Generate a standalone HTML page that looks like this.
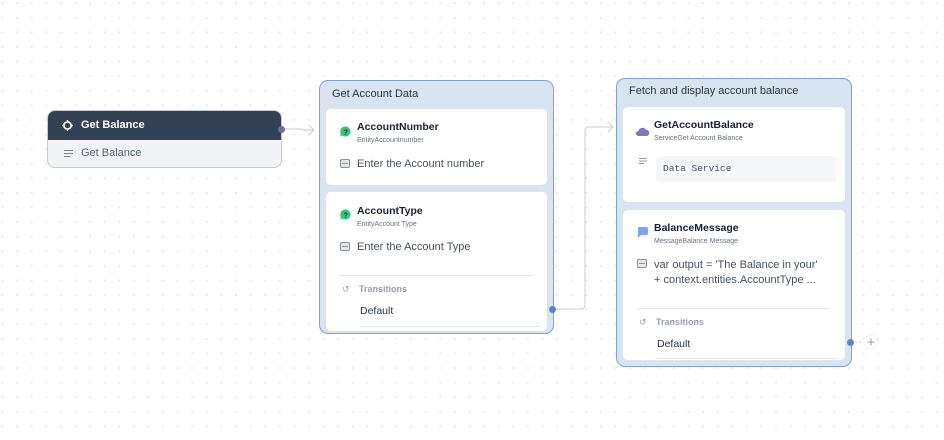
<!DOCTYPE html>
<html><head><style>
*{box-sizing:border-box;margin:0;padding:0}
body{width:944px;height:440px;overflow:hidden;background:#fff;font-family:"Liberation Sans",sans-serif;position:relative;
background-image:radial-gradient(circle,#e4e7ec 0.9px,transparent 1.2px);background-size:14.6px 14.6px;background-position:-4.8px -4.1px}
.abs{position:absolute}
.n1{left:47px;top:110px;width:235px;height:58px;border:1px solid #c3c8d2;border-radius:8px;overflow:hidden;background:#f1f3f7}
.n1 .h{height:29px;background:#334155;color:#fff;font-weight:bold;font-size:11px;line-height:29px;padding-left:33px;position:relative}
.n1 .b{height:28px;color:#5b6472;font-size:11px;line-height:27px;padding-left:33px;position:relative}
.grp{background:#d9e4f1;border:1.5px solid #7fa2d6;border-radius:9px}
.gt{font-size:11px;color:#2c3442;position:absolute;left:12px}
.card{position:absolute;background:#fff;border-radius:5px}
.tt{position:absolute;font-size:10.5px;font-weight:bold;color:#1b2130}
.st{position:absolute;font-size:7px;color:#6b7280}
.tx{position:absolute;font-size:11px;color:#4b5160}
.hr{position:absolute;height:1px;background:#e5e7eb}
.tr{position:absolute;font-size:9px;color:#9aa1ad;font-weight:bold}
.df{position:absolute;font-size:10.5px;color:#2c3442}
</style></head><body>
<svg class="abs" style="left:0;top:0" width="944" height="440">
<path d="M282 129 H300 Q302 129 304 130 H314" fill="none" stroke="#cfd4dc" stroke-width="1.2"/>
<path d="M309 125 L314 130 L309 135" fill="none" stroke="#cfd4dc" stroke-width="1.2"/>
<path d="M552 309 H581 Q585 309 585 305 V131 Q585 127 589 127 H613" fill="none" stroke="#cfd4dc" stroke-width="1.2"/>
<path d="M608 122 L613 127 L608 132" fill="none" stroke="#cfd4dc" stroke-width="1.2"/>
<path d="M851 342 H863" stroke="#cfd4dc" stroke-dasharray="2 2"/>
<circle cx="871" cy="342" r="7" fill="none" stroke="#e5e7eb" stroke-dasharray="1.5 1.5"/>
<path d="M867.5 342 H874.5 M871 338.5 V345.5" stroke="#9aa1ad" stroke-width="1"/>
</svg>
<div class="abs n1">
<div class="h"><svg class="abs" style="left:14px;top:9px" width="11" height="11"><circle cx="5.5" cy="5.5" r="3.6" fill="none" stroke="#fff" stroke-width="1.6"/><path d="M5.5 0v2M5.5 9v2M0 5.5h2M9 5.5h2" stroke="#fff" stroke-width="1.4"/></svg>Get Balance</div>
<div class="b"><svg class="abs" style="left:16px;top:10px" width="9" height="7"><path d="M0 .5h9M0 3.5h9M0 6.5h6" stroke="#7a8290"/></svg>Get Balance</div>
</div>
<div class="abs" style="left:278px;top:126px;width:7px;height:7px;border-radius:50%;background:#6b7384"></div>

<div class="abs grp" style="left:319px;top:80px;width:235px;height:254px">
<div class="gt" style="top:7px">Get Account Data</div>
<div class="card" style="left:6px;top:28px;width:221px;height:76px">
<svg class="abs" style="left:14px;top:17px" width="11" height="11"><path d="M5.5 .5a5 5 0 1 1-3 9l-2.5 1 1-2.5a5 5 0 0 1 4.5-7.5z" fill="#34c77b"/><text x="3.6" y="8.5" font-size="7" font-weight="bold" fill="#123" font-family="Liberation Sans">?</text></svg>
<div class="tt" style="left:31px;top:12px">AccountNumber</div>
<div class="st" style="left:31px;top:28px">EntityAccountnumber</div>
<svg class="abs" style="left:14px;top:50px" width="10" height="9"><rect x=".5" y=".5" width="9" height="8" rx="1.5" fill="#e6e8ec" stroke="#8a919c"/><path d="M2 4.5h6" stroke="#8a919c"/></svg>
<div class="tx" style="left:31px;top:49px">Enter the Account number</div>
</div>
<div class="card" style="left:6px;top:111px;width:221px;height:139px">
<svg class="abs" style="left:14px;top:17px" width="11" height="11"><path d="M5.5 .5a5 5 0 1 1-3 9l-2.5 1 1-2.5a5 5 0 0 1 4.5-7.5z" fill="#34c77b"/><text x="3.6" y="8.5" font-size="7" font-weight="bold" fill="#123" font-family="Liberation Sans">?</text></svg>
<div class="tt" style="left:31px;top:13px">AccountType</div>
<div class="st" style="left:31px;top:29px">EntityAccount Type</div>
<svg class="abs" style="left:14px;top:50px" width="10" height="9"><rect x=".5" y=".5" width="9" height="8" rx="1.5" fill="#e6e8ec" stroke="#8a919c"/><path d="M2 4.5h6" stroke="#8a919c"/></svg>
<div class="tx" style="left:31px;top:49px">Enter the Account Type</div>
<div class="hr" style="left:14px;top:83px;width:193px"></div>
<div class="tr" style="left:16px;top:92px;font-weight:normal">↺</div>
<div class="tr" style="left:33px;top:92px">Transitions</div>
<div class="df" style="left:34px;top:113px">Default</div>
<div class="hr" style="left:34px;top:134px;width:180px"></div>
</div>
</div>
<div class="abs" style="left:549px;top:306px;width:7px;height:7px;border-radius:50%;background:#5b85c8"></div>

<div class="abs grp" style="left:616px;top:78px;width:236px;height:289px">
<div class="gt" style="top:6px">Fetch and display account balance</div>
<div class="card" style="left:6px;top:28px;width:222px;height:95px">
<svg class="abs" style="left:13px;top:20px" width="13" height="9"><path d="M2.5 9a2.5 2.5 0 0 1 0-5 4 4 0 0 1 7.5-1 3 3 0 0 1 .5 6z" fill="#7d76b8"/></svg>
<div class="tt" style="left:31px;top:12px">GetAccountBalance</div>
<div class="st" style="left:31px;top:28px">ServiceGet Account Balance</div>
<svg class="abs" style="left:16px;top:51px" width="8" height="6"><path d="M0 .5h8M0 3h8M0 5.5h5" stroke="#9aa1ad" stroke-width=".9"/></svg>
<div class="abs" style="left:33px;top:49px;width:181px;height:26px;background:#f5f6f8;border-radius:4px;font-family:'Liberation Mono',monospace;font-size:9.5px;color:#4b5160;line-height:26px;padding-left:7px">Data Service</div>
</div>
<div class="card" style="left:6px;top:131px;width:222px;height:150px">
<svg class="abs" style="left:14px;top:17px" width="11" height="11"><path d="M1.5 0h8a1.5 1.5 0 0 1 1.5 1.5v5A1.5 1.5 0 0 1 9.5 8H4l-3 3V1.5A1.5 1.5 0 0 1 1.5 0z" fill="#7aa7f0"/></svg>
<div class="tt" style="left:31px;top:12px">BalanceMessage</div>
<div class="st" style="left:31px;top:28px">MessageBalance Message</div>
<svg class="abs" style="left:14px;top:49px" width="10" height="9"><rect x=".5" y=".5" width="9" height="8" rx="1.5" fill="#e6e8ec" stroke="#8a919c"/><path d="M2 4.5h6" stroke="#8a919c"/></svg>
<div class="tx" style="left:31px;top:48px;line-height:15px">var output = 'The Balance in your'<br>+ context.entities.AccountType ...</div>
<div class="hr" style="left:14px;top:98px;width:193px"></div>
<div class="tr" style="left:16px;top:107px;font-weight:normal">↺</div>
<div class="tr" style="left:33px;top:107px">Transitions</div>
<div class="df" style="left:34px;top:128px">Default</div>
<div class="hr" style="left:34px;top:148px;width:180px"></div>
</div>
</div>
<div class="abs" style="left:847px;top:339px;width:7px;height:7px;border-radius:50%;background:#5b85c8"></div>
</body></html>
